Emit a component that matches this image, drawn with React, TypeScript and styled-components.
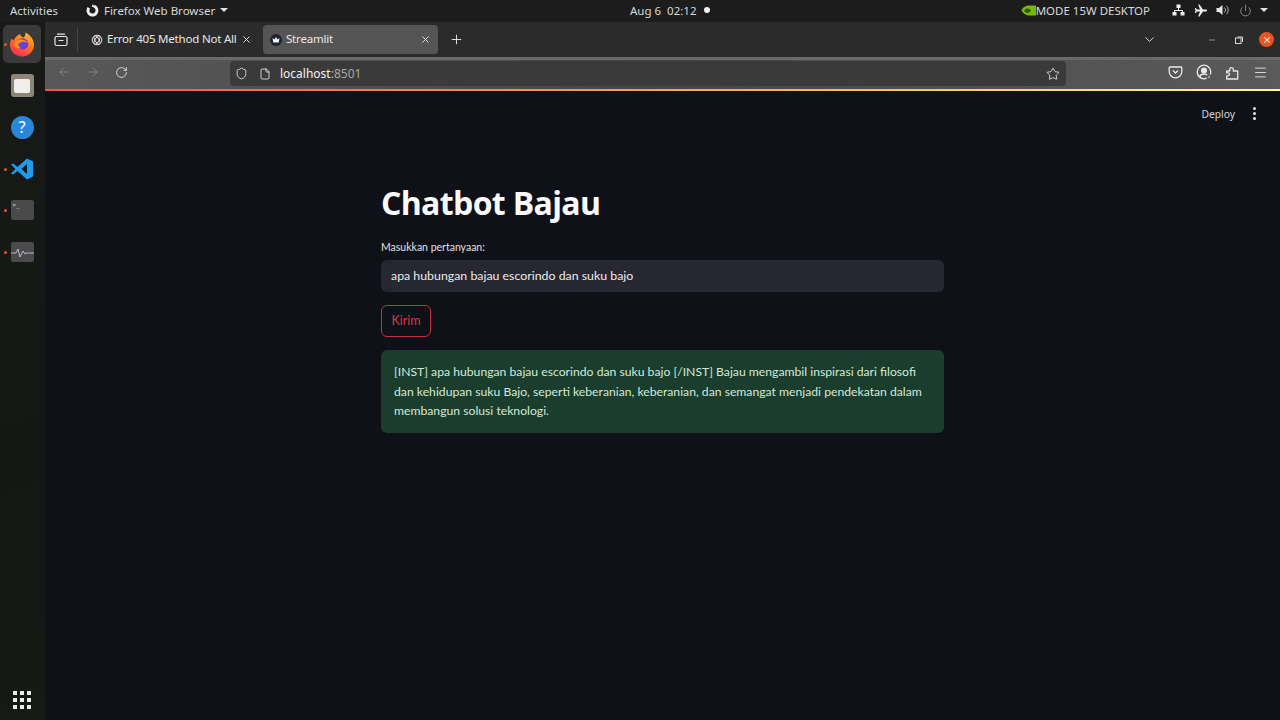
import React from 'react';
import styled, {createGlobalStyle} from 'styled-components';
import {
    ArrowLeft, ArrowRight, ChevronDown, File, Menu, Minus, Plus,
    Power, RotateCw, Shield, Star, X,
} from 'lucide-react';

const GlobalStyle = createGlobalStyle`
    html, body {
        margin: 0;
        height: 100%;
        background: #0e1117;
        overflow: hidden;
    }
    * {
        box-sizing: border-box;
    }
    #root {
        height: 100%;
    }
`

const Screen = styled.div`
    width: 1280px;
    height: 720px;
    display: flex;
    flex-direction: column;
    font-family: 'Noto Sans', sans-serif;
`

const TopBar = styled.div`
    height: 22px;
    flex: none;
    background: #1c1c1c;
    color: #d8d8d8;
    font-size: 11.5px;
    display: grid;
    grid-template-columns: 620px auto 1fr;
    align-items: center;
    padding: 0 12px 2px 10px;
`
const TopGroup = styled.div<{$end?: boolean}>`
    display: flex;
    align-items: center;
    justify-content: ${p => p.$end ? 'flex-end' : 'flex-start'};
`
const TopLabel = styled.span<{$gap?: number}>`
    margin-left: ${p => p.$gap || 0}px;
    white-space: nowrap;
`
const TopIcon = styled.span`
    display: flex;
    margin-left: 28px;
`
const Caret = styled.span<{$gap?: number}>`
    margin-left: ${p => p.$gap || 5}px;
    width: 0;
    height: 0;
    border-left: 4px solid transparent;
    border-right: 4px solid transparent;
    border-top: 4px solid #e0e0e0;
`
const RecordDot = styled.span`
    width: 6px;
    height: 6px;
    border-radius: 50%;
    background: #f2f2f2;
    margin-left: 8px;
`
const TrayIcons = styled.div`
    display: flex;
    align-items: center;
    gap: 9px;
    margin-left: 22px;
    color: #e6e6e6;
`

const Desk = styled.div`
    flex: 1;
    display: flex;
    min-height: 0;
`

const Dock = styled.div`
    width: 45px;
    flex: none;
    background: linear-gradient(160deg, #171a17 0%, #141714 60%, #151a15 100%);
    display: flex;
    flex-direction: column;
    align-items: center;
    padding: 3px 1px 11px 0;
    gap: 3.5px;
`
const DockItem = styled.div<{$active?: boolean; $running?: boolean}>`
    position: relative;
    width: 38px;
    height: 38px;
    border-radius: 5px;
    display: flex;
    align-items: center;
    justify-content: center;
    background: ${p => p.$active ? '#3a3a3a' : 'transparent'};
    &::before {
        content: '';
        display: ${p => p.$running ? 'block' : 'none'};
        position: absolute;
        left: 1px;
        top: 18px;
        width: 3px;
        height: 3px;
        border-radius: 50%;
        background: #e2552c;
    }
`
const AppsGrid = styled.div`
    margin-top: auto;
    display: grid;
    grid-template-columns: repeat(3, 4px);
    gap: 3px;
`
const AppsDot = styled.span`
    width: 4px;
    height: 4px;
    background: #ececec;
`
const Folder = styled.div`
    width: 23px;
    height: 23px;
    border-radius: 3px;
    background: #8d8778;
    display: flex;
    align-items: center;
    justify-content: center;
    &::after {
        content: '';
        width: 16px;
        height: 14px;
        border-radius: 2px;
        background: #f1efeb;
    }
`
const HelpBadge = styled.div`
    width: 23px;
    height: 23px;
    border-radius: 50%;
    background: #2a86d8;
    color: #e8f2fb;
    font-size: 16px;
    font-weight: 500;
    display: flex;
    align-items: center;
    justify-content: center;
`
const TermBox = styled.div`
    width: 23px;
    height: 20px;
    border-radius: 2px;
    background: #4a4a4a;
    color: #e8e8e8;
    font-family: 'DejaVu Sans Mono', monospace;
    font-size: 6px;
    line-height: 8px;
    padding: 1px 2px;
`
const MonitorBox = styled.div`
    width: 23px;
    height: 20px;
    border-radius: 2px;
    background: #4a4a4a;
    display: flex;
    align-items: center;
`

const Browser = styled.div`
    flex: 1;
    min-width: 0;
    display: flex;
    flex-direction: column;
`
const TabStrip = styled.div`
    height: 35px;
    flex: none;
    background: #2b2b2b;
    color: #e8e8e8;
    display: flex;
    align-items: center;
    font-size: 11.5px;
`
const ViewButton = styled.div`
    width: 33px;
    height: 25px;
    display: flex;
    align-items: center;
    justify-content: center;
    border-right: 1px solid #454545;
    margin-right: 6px;
`
const Tab = styled.div<{$active?: boolean}>`
    width: 175px;
    height: 29px;
    margin-right: 4px;
    padding: 0 7px;
    border-radius: 4px;
    background: ${p => p.$active ? '#555555' : 'transparent'};
    display: flex;
    align-items: center;
    gap: 4px;
`
const TabTitle = styled.span`
    flex: 1;
    min-width: 0;
    white-space: nowrap;
    letter-spacing: -0.2px;
    padding-bottom: 2px;
`
const NewTab = styled.div`
    margin-left: 7px;
    display: flex;
`
const WindowControls = styled.div`
    margin-left: auto;
    display: flex;
    align-items: center;
    padding-right: 6px;
`
const ListTabs = styled.div`
    margin-right: 41px;
    display: flex;
`
const WinButton = styled.div`
    width: 27px;
    display: flex;
    justify-content: center;
    color: #cfcfcf;
`
const CloseCircle = styled.div`
    width: 15px;
    height: 15px;
    border-radius: 50%;
    background: #e95420;
    margin-left: 7px;
    display: flex;
    align-items: center;
    justify-content: center;
    color: #fff;
`
const Toolbar = styled.div`
    height: 32px;
    flex: none;
    background:
        linear-gradient(#6a6a6a 0, #6a6a6a 3px, transparent 3px),
        linear-gradient(90deg, #585858 0%, #474747 50%, #5a5a5a 100%);
    display: flex;
    align-items: center;
    padding: 0 12px 2px 4px;
    color: #e8e8e8;
`
const NavButton = styled.div<{$disabled?: boolean}>`
    width: 29px;
    display: flex;
    justify-content: center;
    color: ${p => p.$disabled ? '#858585' : '#e6e6e6'};
`
const UrlBar = styled.div`
    width: 836px;
    height: 25px;
    margin: 3px 0 0 94px;
    border-radius: 4px;
    background: #3a3a3a;
    display: flex;
    align-items: center;
    padding: 0 6px 0 5px;
    font-size: 12px;
    color: #f2f2f2;
`
const UrlText = styled.span`
    margin-left: 9px;
`
const UrlPort = styled.span`
    color: #a9a9a9;
`
const UrlEnd = styled.div`
    margin-left: auto;
    display: flex;
`
const ToolbarEnd = styled.div`
    margin-left: auto;
    display: flex;
    align-items: center;
    gap: 13px;
`
const AccentLine = styled.div`
    height: 2px;
    flex: none;
    background: linear-gradient(90deg, #ff4b4b, #ffb347 60%, #fffd80);
`

const Page = styled.div`
    flex: 1;
    background: #0e1117;
    display: flex;
    flex-direction: column;
    align-items: center;
`
const PageHeader = styled.div`
    align-self: stretch;
    height: 45px;
    flex: none;
    display: flex;
    align-items: center;
    justify-content: flex-end;
    padding: 0 24px 0 0;
    color: #d6d6d8;
    font-size: 10.3px;
    gap: 18px;
`
const Kebab = styled.div`
    display: flex;
    flex-direction: column;
    gap: 2px;
`
const KebabDot = styled.span`
    width: 3px;
    height: 3px;
    border-radius: 50%;
    background: #e6e6e8;
`
const Main = styled.main`
    width: 563px;
    display: flex;
    flex-direction: column;
    padding-top: 46px;
    font-family: 'Lato', sans-serif;
`
const Title = styled.h1`
    margin: 0;
    font-family: 'Open Sans', sans-serif;
    font-size: 32px;
    font-weight: 700;
    line-height: 42px;
    letter-spacing: -0.65px;
    color: #fafafa;
`
const FieldLabel = styled.label`
    margin-top: 16px;
    font-size: 10.5px;
    line-height: 14px;
    color: #e2e2e4;
`
const Field = styled.div`
    margin-top: 6px;
    height: 32px;
    border-radius: 6px;
    background: #262730;
    color: #ececec;
    font-size: 12.35px;
    display: flex;
    align-items: center;
    padding: 0 10px 1px;
`
const SendButton = styled.button`
    margin-top: 13px;
    align-self: flex-start;
    width: 50px;
    height: 32px;
    border-radius: 6px;
    border: 1px solid #c2323c;
    background: transparent;
    color: #d63a44;
    font-family: 'Lato', sans-serif;
    font-size: 12.5px;
    padding: 0 0 2px;
`
const Answer = styled.div`
    margin-top: 13px;
    border-radius: 6px;
    background: #1a3d2e;
    color: #d3e9d6;
    font-size: 12.2px;
    line-height: 19.5px;
    padding: 12px 10px 12px 13px;
    height: 83px;
`

const FirefoxLogo = () => (
    <svg width="26" height="26" viewBox="0 0 26 26">
        <defs>
            <linearGradient id="fx" x1="0.8" y1="0" x2="0.3" y2="1">
                <stop offset="0" stopColor="#ffc22e"/>
                <stop offset="0.45" stopColor="#ff7a1f"/>
                <stop offset="1" stopColor="#ee2a5a"/>
            </linearGradient>
        </defs>
        <path d="M13 25.500C6 25.500 1 20 1 14c0-2.500.6-4.500 1.800-6.500.4 1 1 1.600 1.700 2C5.500 7 8 4.500 11 3c.2 1.500 1.500 3 3.500 3.500 1.300-.8 2-2.500 2-5C20.500 3.500 25 8 25 14c0 6-5 11.500-12 11.500z" fill="url(#fx)"/>
        <circle cx="13.500" cy="13" r="5.800" fill="#8a2fc4"/>
        <circle cx="14" cy="13.500" r="3.200" fill="#4f4fdc"/>
        <path d="M5 14c.5-3 4-6 8-5.500 3 .3 5 2 6 4-2-1.500-4-2-6-1.500-1.500 1-2.500 1-3.500 1.500-.5 2 1 4 3 4.800-3.500.5-6.500-.5-7.500-2.800z" fill="#ff8a24"/>
    </svg>
)

const VsCodeLogo = () => (
    <svg width="24" height="24" viewBox="0 0 24 24">
        <path d="M17 1.500l6 3v15l-6 3L7.500 14 3 17.500 1 16.500 5.500 12 1 7.500l2-1L7.500 10 17 1.500zM17 7l-5.500 5 5.500 5V7z" fill="#1f9cf0"/>
    </svg>
)

const ChatGptMark = () => (
    <svg width="12" height="12" viewBox="0 0 12 12" fill="none" stroke="#d8d8d8" strokeWidth="1">
        <circle cx="6" cy="6" r="4.800"/>
        <ellipse cx="6" cy="6" rx="4.800" ry="2" transform="rotate(60 6 6)"/>
        <ellipse cx="6" cy="6" rx="4.800" ry="2" transform="rotate(-60 6 6)"/>
    </svg>
)

const StreamlitMark = () => (
    <svg width="12" height="12" viewBox="0 0 12 12">
        <circle cx="6" cy="6" r="6" fill="#1d2330"/>
        <path d="M2.500 4l2 1.500L6 3l1.500 2.500 2-1.500-.8 4.500H3.300z" fill="#f4f4f4"/>
    </svg>
)

const NvidiaMark = () => (
    <svg width="15" height="11" viewBox="0 0 15 11">
        <path d="M5 1C2.500 2 .8 4 .5 5.500 2 8 4 10 7 10.500h8V.5H7C6.300.5 5.600.7 5 1z" fill="#76b900"/>
        <path d="M6 3.500c-1.500.5-2.500 1.300-3 2 1 1.500 2 2.300 3.500 2.500C8 7.800 9.500 6.700 10 5.500 9 4 7.500 3.200 6 3.500z" fill="#35560a"/>
    </svg>
)

const NetworkIcon = () => (
    <svg width="13" height="12" viewBox="0 0 13 12" fill="#eee">
        <rect x="4.500" y="0.500" width="4" height="3.500"/>
        <rect x="0.500" y="8" width="4" height="3.500"/>
        <rect x="8.500" y="8" width="4" height="3.500"/>
        <path d="M6 4h1v2h4v2h-1V7H3v1H2V6h4z"/>
    </svg>
)

const PlaneIcon = () => (
    <svg width="13" height="13" viewBox="0 0 13 13" fill="#eee">
        <path d="M13 6.500c0-.7-.7-1-1.300-1H9L5.500.5H4.200L6 5.500H3L1.800 4H.8l.7 2.500-.7 2.500h1L3 7.500h3l-1.800 5h1.300L9 7.500h2.700c.6 0 1.300-.3 1.300-1z"/>
    </svg>
)

const VolumeIcon = () => (
    <svg width="14" height="12" viewBox="0 0 14 12" fill="none">
        <path d="M0.500 4h2.500l3.500-3v10L3 8H0.500z" fill="#e6e6e6"/>
        <path d="M8.500 3.500a3.500 3.500 0 010 5M10.500 1.800a6 6 0 010 8.400" stroke="#aaa" strokeWidth="1"/>
    </svg>
)

const PocketIcon = () => (
    <svg width="15" height="14" viewBox="0 0 14 14" fill="none" stroke="#e8e8e8" strokeWidth="1.300">
        <path d="M1.500 2h11a.8.800 0 01.800.800V6.500a6.300 6.300 0 01-12.600 0V2.800A.8.800 0 011.500 2z"/>
        <path d="M4.500 5.500L7 8l2.500-2.500"/>
    </svg>
)

const AccountIcon = () => (
    <svg width="16" height="16" viewBox="0 0 16 16" fill="none" stroke="#e8e8e8" strokeWidth="1.300">
        <circle cx="8" cy="8" r="6.800"/>
        <circle cx="8" cy="6.500" r="2.400" fill="#e8e8e8"/>
        <path d="M3.500 12.800c1-2 2.700-2.800 4.500-2.800s3 .6 3.800 1.800" strokeWidth="1.600"/>
        <circle cx="13" cy="13" r="2" fill="#9a9a9a" stroke="#555"/>
    </svg>
)

const ExtensionIcon = () => (
    <svg width="15" height="15" viewBox="0 0 15 15" fill="none" stroke="#e8e8e8" strokeWidth="1.300" strokeLinejoin="round">
        <path d="M2 6h3V4.500a1.800 1.800 0 013.600 0V6h4.400v8H2v-3.200h1.300a1.500 1.500 0 000-3H2z" transform="translate(-.3 0)"/>
    </svg>
)

const RestoreIcon = () => (
    <svg width="8" height="8" viewBox="0 0 8 8" fill="none" stroke="#d8d8d8">
        <rect x="0.500" y="2" width="5.500" height="5.500"/>
        <path d="M2.500 1h5v5"/>
    </svg>
)

const ArchiveIcon = () => (
    <svg width="14" height="14" viewBox="0 0 14 14" fill="none" stroke="#e4e4e4" strokeWidth="1.200">
        <rect x="1" y="3.500" width="12" height="9" rx="1.500"/>
        <path d="M3 1.200h8M4.500 7.500h5"/>
    </svg>
)

const MonitorWave = () => (
    <svg width="23" height="20" viewBox="0 0 23 20" fill="none" stroke="#b8b8c8" strokeWidth="1">
        <path d="M0 11h5l2-4 2 8 3-6 2 3 1-1h8"/>
    </svg>
)

const FirefoxGlyph = () => (
    <svg width="13" height="13" viewBox="0 0 13 13" fill="none">
        <circle cx="6.500" cy="6.500" r="4.500" stroke="#eee" strokeWidth="3" strokeDasharray="22 6" transform="rotate(-70 6.500 6.500)"/>
        <path d="M6.500 0L9 3 6 3z" fill="#eee"/>
    </svg>
)

export default function App() {
    const apps = Array.from({length: 9});
    return (
        <Screen>
            <GlobalStyle/>
            <TopBar>
                <TopGroup>
                    <TopLabel>Activities</TopLabel>
                    <TopIcon><FirefoxGlyph/></TopIcon>
                    <TopLabel $gap={5}>Firefox Web Browser</TopLabel>
                    <Caret/>
                </TopGroup>
                <TopGroup>
                    <TopLabel>Aug 6&nbsp; 02:12</TopLabel>
                    <RecordDot/>
                </TopGroup>
                <TopGroup $end>
                    <NvidiaMark/>
                    <TopLabel>MODE 15W DESKTOP</TopLabel>
                    <TrayIcons>
                        <NetworkIcon/>
                        <PlaneIcon/>
                        <VolumeIcon/>
                        <Power size={13} strokeWidth={1.2} color="#bdbdbd"/>
                    </TrayIcons>
                    <Caret $gap={8}/>
                </TopGroup>
            </TopBar>
            <Desk>
                <Dock>
                    <DockItem $active $running><FirefoxLogo/></DockItem>
                    <DockItem><Folder/></DockItem>
                    <DockItem><HelpBadge>?</HelpBadge></DockItem>
                    <DockItem $running><VsCodeLogo/></DockItem>
                    <DockItem $running><TermBox>&gt;_</TermBox></DockItem>
                    <DockItem $running><MonitorBox><MonitorWave/></MonitorBox></DockItem>
                    <AppsGrid>
                        {apps.map((_, i) => <AppsDot key={i}/>)}
                    </AppsGrid>
                </Dock>
                <Browser>
                    <TabStrip>
                        <ViewButton><ArchiveIcon/></ViewButton>
                        <Tab>
                            <ChatGptMark/>
                            <TabTitle>Error 405 Method Not All</TabTitle>
                            <X size={11} strokeWidth={2}/>
                        </Tab>
                        <Tab $active>
                            <StreamlitMark/>
                            <TabTitle>Streamlit</TabTitle>
                            <X size={11} strokeWidth={2}/>
                        </Tab>
                        <NewTab><Plus size={15} strokeWidth={1.5}/></NewTab>
                        <WindowControls>
                            <ListTabs><ChevronDown size={15} strokeWidth={1.5}/></ListTabs>
                            <WinButton><Minus size={8} strokeWidth={2}/></WinButton>
                            <WinButton><RestoreIcon/></WinButton>
                            <CloseCircle><X size={10} strokeWidth={2.5}/></CloseCircle>
                        </WindowControls>
                    </TabStrip>
                    <Toolbar>
                        <NavButton $disabled><ArrowLeft size={14} strokeWidth={1.5}/></NavButton>
                        <NavButton $disabled><ArrowRight size={14} strokeWidth={1.5}/></NavButton>
                        <NavButton><RotateCw size={13} strokeWidth={1.6}/></NavButton>
                        <UrlBar>
                            <Shield size={13} strokeWidth={1.4}/>
                            <File size={12} strokeWidth={1.6} style={{marginLeft: 11}}/>
                            <UrlText>localhost<UrlPort>:8501</UrlPort></UrlText>
                            <UrlEnd><Star size={14} strokeWidth={1.4}/></UrlEnd>
                        </UrlBar>
                        <ToolbarEnd>
                            <PocketIcon/>
                            <AccountIcon/>
                            <ExtensionIcon/>
                            <Menu size={15} strokeWidth={1.4}/>
                        </ToolbarEnd>
                    </Toolbar>
                    <AccentLine/>
                    <Page>
                        <PageHeader>
                            <span>Deploy</span>
                            <Kebab><KebabDot/><KebabDot/><KebabDot/></Kebab>
                        </PageHeader>
                        <Main>
                            <Title>Chatbot Bajau</Title>
                            <FieldLabel>Masukkan pertanyaan:</FieldLabel>
                            <Field>apa hubungan bajau escorindo dan suku bajo</Field>
                            <SendButton>Kirim</SendButton>
                            <Answer>
                                [INST] apa hubungan bajau escorindo dan suku bajo [/INST] Bajau mengambil inspirasi dari filosofi dan kehidupan suku Bajo, seperti keberanian, keberanian, dan semangat menjadi pendekatan dalam membangun solusi teknologi.
                            </Answer>
                        </Main>
                    </Page>
                </Browser>
            </Desk>
        </Screen>
    );
}
